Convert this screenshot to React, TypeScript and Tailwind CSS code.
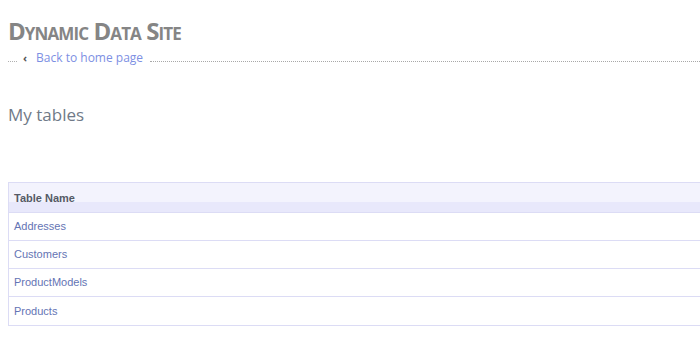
const tables = ["Addresses", "Customers", "ProductModels", "Products"];

export default function App() {
  return (
    <div className="w-[700px] h-[350px] overflow-hidden bg-white font-['Open_Sans',sans-serif]">
      <div className="pl-2 pt-[16px]">
        {/* Header */}
        <h1 className="text-[24px] leading-[30px] font-bold text-[#858585] [font-variant:small-caps] tracking-[-0.9px]">
          Dynamic Data Site
        </h1>
        <div className="flex items-center h-[16px] mt-[4px]">
          <span className="w-[9px] border-b border-dotted border-[#b0b0b0] mt-[7px]" />
          <span className="ml-[6px] text-[11px] font-bold text-[#555]">‹</span>
          <a href="#" className="ml-[9px] text-[12px] text-[#7d8fe3]">
            Back to home page
          </a>
          <span className="flex-1 ml-[7px] border-b border-dotted border-[#a8a8a8] mt-[6px]" />
        </div>

        <h2 className="mt-[37px] text-[17px] leading-[24px] text-[#707a88]">My tables</h2>

        {/* Table */}
        <div className="mt-[55px] w-[720px] border border-[#dcdcf5] font-['Liberation_Sans',sans-serif]">
          <div className="h-[30px] bg-[linear-gradient(#f3f3fd_0,#f3f3fd_19px,#e8e8fb_19px)] border-b border-[#dcdcf5] px-[5px] pt-[8px]">
            <span className="text-[11px] leading-[14px] font-bold text-[#555a66] block">Table Name</span>
          </div>
          {tables.map((t, i) => (
            <div
              key={t}
              className={`h-[28px] flex items-center px-[5px] ${i < tables.length - 1 ? "border-b border-[#dcdcf5]" : ""}`}
            >
              <a href="#" className="text-[11px] text-[#6474b4]">
                {t}
              </a>
            </div>
          ))}
        </div>
      </div>
    </div>
  );
}
